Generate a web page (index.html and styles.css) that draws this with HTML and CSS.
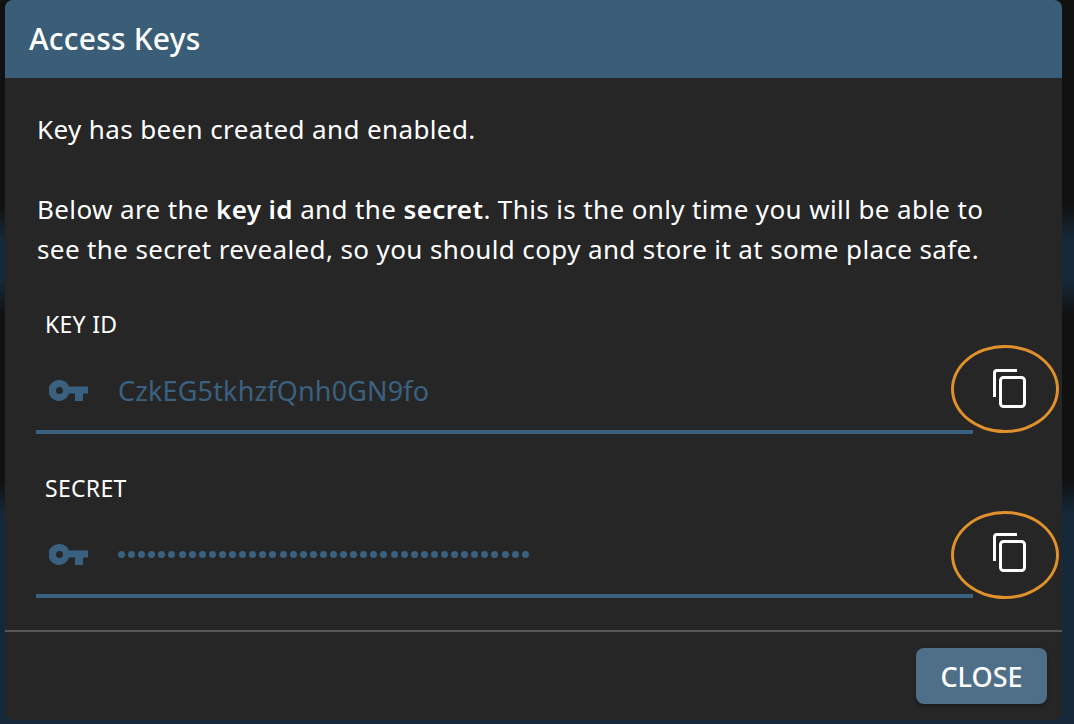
FILE: index.html
```html
<!DOCTYPE html>
<html lang="en">
<head>
<meta charset="utf-8">
<title>Access Keys</title>
<link rel="stylesheet" href="styles.css">
</head>
<body>
<div class="modal">
  <header class="modal-header">Access Keys</header>
  <main class="modal-body">
    <p class="msg">Key has been created and enabled.</p>
    <p class="msg msg-gap">Below are the <b>key id</b> and the <b>secret</b>. This is the only time you will be able to<br>see the secret revealed, so you should copy and store it at some place safe.</p>
    <section class="field field-first">
      <div class="field-label">KEY ID</div>
      <div class="field-row">
        <div class="input">
          <svg class="key" viewBox="0 0 39 21" width="39" height="21"><path fill="#3b6180" fill-rule="evenodd" d="M10.500 0A10.500 10.500 0 0 1 20 6.500H39V13.500H34V21H26V13.500H20A10.500 10.500 0 1 1 10.500 0zM10.500 7a3.500 3.500 0 1 0 0 7 3.500 3.500 0 0 0 0-7z"/></svg>
          <span class="value">CzkEG5tkhzfQnh0GN9fo</span>
        </div>
        <div class="copy">
          <svg viewBox="0 0 33 39" width="33" height="39"><path fill="none" stroke="#fff" stroke-width="3" d="M1.500 28V4Q1.500 1.500 4 1.500H24"/><rect x="7.500" y="8.500" width="24" height="29" rx="3" fill="none" stroke="#fff" stroke-width="3"/></svg>
          <span class="ring"></span>
        </div>
      </div>
    </section>
    <section class="field">
      <div class="field-label">SECRET</div>
      <div class="field-row">
        <div class="input">
          <svg class="key" viewBox="0 0 39 21" width="39" height="21"><path fill="#3b6180" fill-rule="evenodd" d="M10.500 0A10.500 10.500 0 0 1 20 6.500H39V13.500H34V21H26V13.500H20A10.500 10.500 0 1 1 10.500 0zM10.500 7a3.500 3.500 0 1 0 0 7 3.500 3.500 0 0 0 0-7z"/></svg>
          <span class="dots">
            <i></i><i></i><i></i><i></i><i></i><i></i><i></i><i></i><i></i><i></i>
            <i></i><i></i><i></i><i></i><i></i><i></i><i></i><i></i><i></i><i></i>
            <i></i><i></i><i></i><i></i><i></i><i></i><i></i><i></i><i></i><i></i>
            <i></i><i></i><i></i><i></i><i></i><i></i><i></i><i></i><i></i><i></i>
            <i></i>
          </span>
        </div>
        <div class="copy">
          <svg viewBox="0 0 33 39" width="33" height="39"><path fill="none" stroke="#fff" stroke-width="3" d="M1.500 28V4Q1.500 1.500 4 1.500H24"/><rect x="7.500" y="8.500" width="24" height="29" rx="3" fill="none" stroke="#fff" stroke-width="3"/></svg>
          <span class="ring ring-low"></span>
        </div>
      </div>
    </section>
  </main>
  <footer class="modal-footer">
    <button class="close">CLOSE</button>
  </footer>
</div>
</body>
</html>
```
FILE: styles.css
```css
* { box-sizing: border-box; }
html, body { margin: 0; height: 724px; overflow: hidden; }
body {
  background: linear-gradient(180deg, #111 0, #111 205px, #16293a 240px, #16293a 280px, #111 315px, #111 480px, #16293a 515px, #16293a 724px);
  font-family: "Noto Sans", "Open Sans", sans-serif;
  color: #fff;
}
.modal {
  width: 1057px;
  height: 720px;
  margin-left: 5px;
  background: #262626;
  border-radius: 8px;
  display: flex;
  flex-direction: column;
  overflow: hidden;
}
.modal-header {
  height: 78px;
  flex: none;
  background: #3a5d78;
  padding: 0 24px;
  font-size: 30px;
  font-weight: 500;
  line-height: 78px;
  letter-spacing: 0.2px;
}
.modal-body {
  flex: 1;
  padding: 32px 32px 0;
}
.msg {
  margin: 0;
  font-size: 26px;
  line-height: 39.5px;
  letter-spacing: 0.38px;
  white-space: nowrap;
}
.msg b { font-weight: 600; }
.msg-gap { margin-top: 40.5px; }
.field { margin-top: 40px; width: 1000px; }
.field-first { margin-top: 41px; }
.field-label {
  font-size: 23px;
  line-height: 28px;
  padding-left: 8px;
  letter-spacing: 0.3px;
}
.field-row {
  display: flex;
  align-items: flex-start;
}
.input {
  width: 937px;
  height: 96px;
  margin-left: -1px;
  border-bottom: 4px solid #3b6180;
  display: flex;
  align-items: center;
  padding-top: 12px;
  padding-left: 13px;
}
.key { flex: none; }
.value {
  margin-left: 30px;
  font-size: 27px;
  color: #3b6180;
  letter-spacing: 0.15px;
}
.dots {
  margin-left: 30px;
  display: flex;
  gap: 3.1px;
}
.dots i {
  width: 7px;
  height: 7px;
  border-radius: 50%;
  background: #3b6180;
}
.copy {
  position: relative;
  width: 64px;
  height: 96px;
  flex: none;
  display: flex;
  align-items: center;
  padding-left: 20px;
  padding-top: 5px;
}
.ring {
  position: absolute;
  left: -22px;
  top: 7px;
  width: 108px;
  height: 88px;
  border: 3px solid #e0902c;
  border-radius: 50%;
}
.ring-low { top: 9px; }
.modal-footer {
  height: 90px;
  flex: none;
  border-top: 2px solid #575757;
  display: flex;
  justify-content: flex-end;
  padding: 16px 15px 0 0;
}
.close {
  width: 131px;
  height: 56px;
  border: 0;
  border-radius: 8px;
  background: #4f6f88;
  color: #fff;
  font-family: inherit;
  font-size: 27px;
  font-weight: 500;
  box-shadow: 0 2px 4px rgba(0, 0, 0, 0.3);
}
```
